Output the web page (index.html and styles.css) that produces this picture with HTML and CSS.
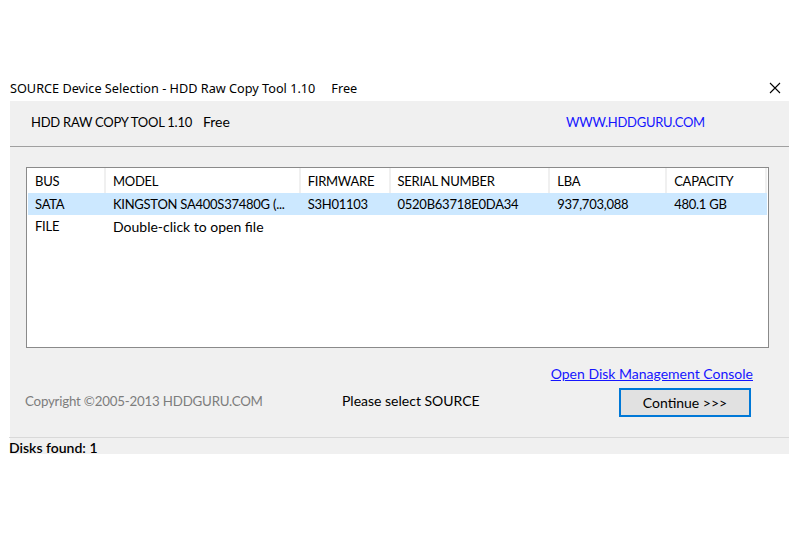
FILE: index.html
```html
<!DOCTYPE html>
<html>
<head>
<meta charset="utf-8">
<link rel="stylesheet" href="styles.css">
</head>
<body>
<div class="window">
  <div class="titlebar">
    <span class="title">SOURCE Device Selection - HDD Raw Copy Tool 1.10<span class="gap"></span>Free</span>
    <svg class="close" width="12" height="12" viewBox="0 0 12 12"><path d="M1 1L11 11M11 1L1 11" stroke="#000" stroke-width="1.1" fill="none"/></svg>
  </div>
  <div class="client">
    <div class="header">
      <span class="app caps">HDD RAW COPY TOOL 1.10<span class="gap2"></span><span class="lower">Free</span></span>
      <span class="site caps">WWW.HDDGURU.COM</span>
    </div>
    <div class="body">
      <div class="list">
        <div class="row head">
          <div class="c bus caps">BUS</div>
          <div class="c model caps">MODEL</div>
          <div class="c fw caps">FIRMWARE</div>
          <div class="c sn caps">SERIAL NUMBER</div>
          <div class="c lba caps">LBA</div>
          <div class="c cap caps">CAPACITY</div>
        </div>
        <div class="row sel">
          <div class="c bus caps">SATA</div>
          <div class="c model caps">KINGSTON SA400S37480G (...</div>
          <div class="c fw caps">S3H01103</div>
          <div class="c sn caps">0520B63718E0DA34</div>
          <div class="c lba caps">937,703,088</div>
          <div class="c cap caps">480.1 GB</div>
        </div>
        <div class="row">
          <div class="c bus caps">FILE</div>
          <div class="c wide">Double-click to open file</div>
        </div>
      </div>
      <div class="footer">
        <div class="linkrow"><a class="dm" href="#">Open Disk Management Console</a></div>
        <div class="mainrow">
          <span class="copy">Copyright ©2005-2013 HDDGURU.COM</span>
          <span class="status">Please select SOURCE</span>
          <button class="btn">Continue &gt;&gt;&gt;</button>
        </div>
      </div>
    </div>
    <div class="statusbar">Disks found: 1</div>
  </div>
</div>
</body>
</html>
```
FILE: styles.css
```css
html, body {
  margin: 0;
  padding: 0;
  background: #ffffff;
}
body {
  width: 800px;
  height: 533px;
  overflow: hidden;
  font-family: Lato, "Open Sans", sans-serif;
  color: #000;
}
.window {
  padding-top: 73px;
}
.titlebar {
  height: 29px;
  display: flex;
  align-items: center;
  justify-content: space-between;
  padding: 0 19px 0 10px;
  font-family: "Noto Sans", "Open Sans", sans-serif;
  font-size: 12.7px;
  color: #000;
  margin-bottom: -1px;
}
.gap { display: inline-block; width: 16px; }
.gap2 { display: inline-block; width: 11px; }
.close { display: block; margin-top: 1px; }
.client {
  margin: 0 11px 0 10px;
  background: #f0f0f0;
}
.caps {
  font-size: 13px;
  letter-spacing: -0.25px;
}
.lower {
  font-size: 14px;
  letter-spacing: 0;
}
.header {
  height: 46px;
  border-bottom: 1px solid #a0a0a0;
  display: flex;
  align-items: center;
  padding-left: 21px;
  padding-bottom: 4px;
  box-sizing: border-box;
}
.app { width: 535px; }
.site { color: #1515ff; }
.body {
  padding: 20px 20px 0 16px;
  height: 270px;
}
.list {
  height: 179px;
  border: 1px solid #8a8a8a;
  background: #fff;
  padding: 0 1px;
  font-size: 14px;
}
.row {
  display: flex;
  height: 22px;
  align-items: center;
}
.row.head {
  height: 25px;
}
.row.sel { background: #cce8ff; }
.c {
  padding-left: 7px;
  box-sizing: border-box;
  height: 100%;
  display: flex;
  align-items: center;
  white-space: nowrap;
}
.head .c { border-right: 2px solid #f0f0f0; }
.bus { width: 78px; }
.model { width: 195px; }
.fw { width: 90px; }
.sn { width: 160px; }
.lba { width: 117px; }
.cap { width: 100px; }
.wide { flex: 1; font-size: 14px; }
.footer {
  display: flex;
  flex-direction: column;
}
.linkrow {
  display: flex;
  justify-content: flex-end;
  padding-right: 16px;
  margin-top: 16px;
  height: 18px;
  align-items: center;
}
.dm {
  color: #1515ff;
  font-size: 14px;
}
.mainrow {
  display: flex;
  align-items: center;
  margin-top: 6px;
}
.copy {
  color: #7d7d7d;
  font-size: 13.3px;
  letter-spacing: -0.2px;
  width: 317px;
  margin-left: -1px;
  padding-bottom: 4px;
}
.status {
  font-size: 14px;
  width: 277px;
  padding-bottom: 4px;
}
.btn {
  width: 132px;
  height: 29px;
  border: 2px solid #0078d7;
  background: #e1e1e1;
  font-family: Lato, "Open Sans", sans-serif;
  font-size: 14px;
  color: #000;
  padding: 0;
}
.statusbar {
  border-top: 1px solid #d9d9d9;
  height: 16px;
  font-size: 14px;
  font-weight: 600;
  line-height: 20px;
  overflow: visible;
  margin-left: -1px;
}
```
